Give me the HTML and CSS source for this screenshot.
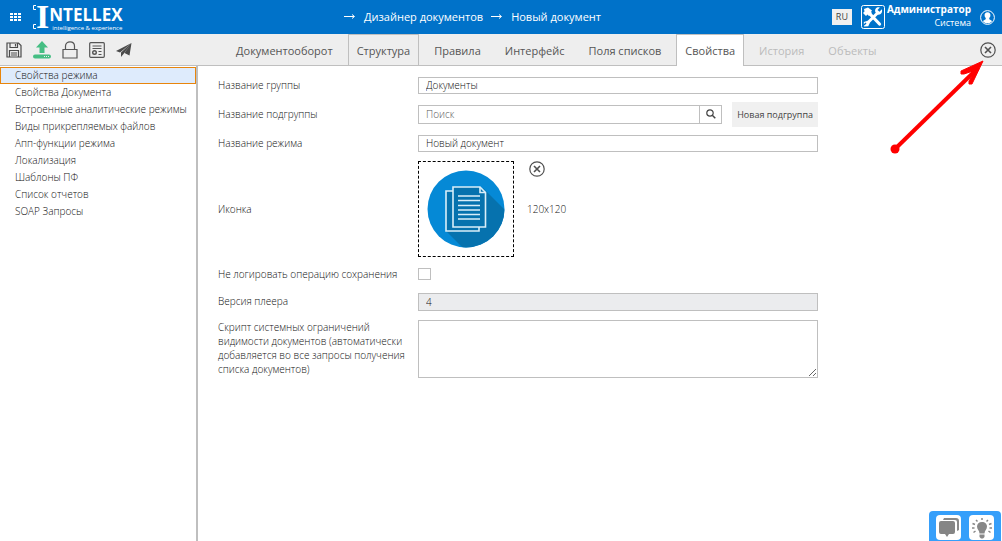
FILE: index.html
```html
<!DOCTYPE html>
<html lang="ru">
<head>
<meta charset="utf-8">
<title>Intellex</title>
<link rel="stylesheet" href="styles.css">
</head>
<body>
<svg class="defs" aria-hidden="true">
  <symbol id="close" viewBox="0 0 16 16">
    <circle cx="8" cy="8" r="7.2" fill="none" stroke="#505050" stroke-width="1.2"/>
    <path d="M5 5l6 6M11 5l-6 6" stroke="#505050" stroke-width="1.6"/>
  </symbol>
</svg>
<header class="header">
  <button class="icon-btn apps" aria-label="Меню">
    <svg width="11" height="9" viewBox="0 0 11 9" fill="#fff"><path d="M0 0h3v2H0zM4 0h3v2H4zM8 0h3v2H8zM0 3h3v2H0zM4 3h3v2H4zM8 3h3v2H8zM0 6h3v2H0zM4 6h3v2H4zM8 6h3v2H8z"/></svg>
  </button>
  <a class="logo" href="#">
    <svg class="logo-frame" width="3" height="24" viewBox="0 0 3 24"><path d="M3 .5H.5v4H3M3 23.500H.5v-4H3" fill="none" stroke="#fff"/></svg>
    <span class="logo-cap">I</span>
    <span class="logo-text"><span class="logo-name">NTELLEX</span><span class="logo-tag">intelligence &amp; experience</span></span>
  </a>
  <nav class="crumbs">
    <svg width="12" height="7" viewBox="0 0 12 7"><path d="M0 3.5h10M8 1.5l2.500 2-2.500 2" fill="none" stroke="#fff"/></svg>
    <a href="#">Дизайнер документов</a>
    <svg width="12" height="7" viewBox="0 0 12 7"><path d="M0 3.5h10M8 1.5l2.500 2-2.500 2" fill="none" stroke="#fff"/></svg>
    <a href="#">Новый документ</a>
  </nav>
  <div class="account">
    <button class="lang">RU</button>
    <button class="icon-btn tools" aria-label="Настройки">
      <svg width="24" height="24" viewBox="0 0 24 24"><rect x=".5" y=".5" width="23" height="23" rx="2" fill="none" stroke="#fff"/><path d="M9 9l9.500 10" stroke="#fff" stroke-width="3.200" stroke-linecap="round"/><path d="M3 4l4-1.500 4 3-1 1.500 1 1-3 3-1.500-1.500L5 11 2 8l1.500-1.500z" fill="#fff"/><path d="M5 19.500L16.500 8" stroke="#fff" stroke-width="3"/><path d="M20.800 4.200l-2.300 2.600-2-1.800 2.300-2.500c-3-.8-5.300 1.500-4.500 4.500l2.200 2.500c3 .8 5.500-2 4.300-5.300z" fill="#fff"/><path d="M3 21.500l-.2-4.500 4-1.200 2 2-1.500 3.500z" fill="#fff"/><path d="M3 20l2-2" stroke="#0072c9" stroke-width="1.500"/></svg>
    </button>
    <div class="user"><strong>Администратор</strong><span class="role">Система</span></div>
    <button class="icon-btn" aria-label="Профиль">
      <svg width="15" height="15" viewBox="0 0 15 15"><circle cx="7.500" cy="7.500" r="6.900" fill="none" stroke="#fff"/><path d="M7.500 2.200c2 0 3 1.300 2.900 3.100 0 1.300-.6 2.100-1.200 2.800 0 1.300.2 1.700 2 2.300l1 .5c-1.200 1.500-2.700 2.300-4.700 2.300s-3.500-.8-4.700-2.300l1-.5c1.800-.6 2-1 2-2.300-.6-.7-1.200-1.500-1.200-2.800-.1-1.800.9-3.100 2.900-3.100z" fill="#fff"/></svg>
    </button>
  </div>
</header>

<div class="toolbar">
  <div class="actions">
    <button class="icon-btn" aria-label="Сохранить"><svg width="16" height="16" viewBox="0 0 16 16" fill="none" stroke="#4a4a4a" stroke-width="1.200"><path d="M1 1h11.500L15 3.500V15H1zM4 1v4.500h7.500V1M9.500 2v2.500M3.500 15V8.500h9V15M5 11h6M5 13h6"/></svg></button>
    <button class="icon-btn" aria-label="Загрузить"><svg width="18" height="18" viewBox="0 0 18 18"><path d="M9 0l6 6.500h-3.500V12h-5V6.500H3z" fill="#45be83"/><rect x="0" y="13.500" width="18" height="4" rx="2" fill="#45be83"/><path d="M11 15.500h1M13 15.500h1M15 15.500h1" stroke="#eee"/></svg></button>
    <button class="icon-btn" aria-label="Заблокировать"><svg width="16" height="18" viewBox="0 0 16 18" fill="none" stroke="#555" stroke-width="1.200"><path d="M1 8.500h14v8.500H1zM3.500 8.500V5c0-5.500 9-5.500 9 0v3.500"/></svg></button>
    <button class="icon-btn" aria-label="Сертификат"><svg width="16" height="16" viewBox="0 0 16 16" fill="none" stroke="#555" stroke-width="1.200"><rect x=".7" y=".7" width="14.600" height="14.600" rx="1"/><path d="M3.500 4h9M3.500 6.500h9M9.500 9.500h3M9.500 12.500h3" stroke-width="1"/><circle cx="5.500" cy="10.500" r="1.800" stroke-width="1.400"/></svg></button>
    <button class="icon-btn" aria-label="Отправить"><svg width="16" height="14" viewBox="0 0 16 14" fill="#4a4a4a"><path d="M15.500 0L0 8l4 1.500zM15.500 0L5 9.500V14l2.500-3zM15.500 0l-7 10 5 2.500z"/></svg></button>
  </div>
  <nav class="tabs">
    <a class="tab" href="#">Документооборот</a>
    <a class="tab framed" href="#">Структура</a>
    <a class="tab" href="#">Правила</a>
    <a class="tab" href="#">Интерфейс</a>
    <a class="tab" href="#">Поля списков</a>
    <a class="tab framed active" href="#">Свойства</a>
    <a class="tab disabled" href="#">История</a>
    <a class="tab disabled" href="#">Объекты</a>
  </nav>
  <button class="icon-btn close" aria-label="Закрыть"><svg width="16" height="16"><use href="#close"/></svg></button>
</div>

<div class="body">
  <nav class="sidebar">
    <a class="selected" href="#">Свойства режима</a>
    <a href="#">Свойства Документа</a>
    <a href="#">Встроенные аналитические режимы</a>
    <a href="#">Виды прикрепляемых файлов</a>
    <a href="#">Апп-функции режима</a>
    <a href="#">Локализация</a>
    <a href="#">Шаблоны ПФ</a>
    <a href="#">Список отчетов</a>
    <a href="#">SOAP Запросы</a>
  </nav>
  <main class="content">
    <form class="form">
      <label for="group">Название группы</label>
      <input id="group" class="field" type="text" value="Документы">

      <label for="subgroup">Название подгруппы</label>
      <div class="subgroup">
        <div class="search">
          <input id="subgroup" class="field" type="text" placeholder="Поиск">
          <button type="button" class="search-btn" aria-label="Найти"><svg width="10" height="10" viewBox="0 0 10 10" fill="none" stroke="#444" stroke-width="1.200"><circle cx="4" cy="4" r="3.200"/><path d="M6.300 6.300l3 3" stroke-width="1.500"/></svg></button>
        </div>
        <button type="button" class="new-btn">Новая подгруппа</button>
      </div>

      <label for="mode">Название режима</label>
      <input id="mode" class="field" type="text" value="Новый документ">

      <span>Иконка</span>
      <div class="picture">
        <div class="preview">
          <svg width="78" height="78" viewBox="0 0 78 78">
            <clipPath id="disc"><circle cx="39" cy="39" r="38.500"/></clipPath>
            <g clip-path="url(#disc)">
              <rect width="78" height="78" fill="#0589d6"/>
              <path d="M56 18l30 30v40H46L19 61l34-2z" fill="#0672ae"/>
            </g>
            <g fill="#0672ae" stroke="#d9eef9" stroke-width="1.600">
              <path d="M19 21h33v40H19z"/>
              <path d="M26 17h27l5.500 5.500V57H26z"/>
              <path d="M53 17v5.500h5.500" fill="none"/>
              <path d="M31 26h22M31 30.500h22M31 35.500h22M31 40h22M31 44.500h22M31 49h22"/>
            </g>
          </svg>
        </div>
        <div class="picture-side">
          <button type="button" class="icon-btn" aria-label="Удалить"><svg width="16" height="16"><use href="#close"/></svg></button>
          <span>120x120</span>
        </div>
      </div>

      <label for="nolog">Не логировать операцию сохранения</label>
      <input id="nolog" class="check" type="checkbox">

      <label for="player">Версия плеера</label>
      <input id="player" class="field readonly" type="text" value="4" readonly>

      <label class="top" for="script">Скрипт системных ограничений видимости документов (автоматически добавляется во все запросы получения списка документов)</label>
      <textarea id="script" class="area"></textarea>
    </form>
  </main>
</div>

<svg class="pointer" width="100" height="96" viewBox="0 0 100 96" fill="none" stroke="#f00" aria-hidden="true">
  <circle cx="5" cy="89" r="4.500" fill="#f00" stroke="none"/>
  <path d="M5 89L88 8" stroke-width="4"/>
  <path d="M93 1L71 11v3h3l12-4-7 11v3h3z" fill="#f00" stroke="#f00" stroke-linejoin="round"/>
</svg>

<div class="dock">
  <button aria-label="Чат"><svg width="20" height="21" viewBox="0 0 20 21"><path d="M5 1h12q3 0 3 3v9l-2 1V5q0-2-2-2H4z" fill="#888"/><path d="M2 4h12q2 0 2 2v9q0 2-2 2h-4l-2 3-2-3H2q-2 0-2-2V6q0-2 2-2z" fill="#858585"/></svg></button>
  <button aria-label="Подсказка"><svg width="22" height="22" viewBox="0 0 22 22"><path d="M11 5c3 0 5 2 5 4.500 0 3-2.500 4-2.500 7H8.500c0-3-2.500-4-2.500-7C6 7 8 5 11 5zM8.500 17.500h5V20l-1.500 1.500h-2L8.500 20z" fill="#888"/><path d="M11 1v2M5 3l1.500 1.500M17 3l-1.500 1.500M1.500 6.500l2.500 1M20.500 6.500l-2.500 1M1 11h2.500M21 11h-2.500M2.500 15.500L4.500 14M19.500 15.500l-2-1.500" stroke="#888" stroke-width="1.500"/></svg></button>
</div>
</body>
</html>
```

FILE: styles.css
```css
* { box-sizing: border-box; }

body {
  margin: 0;
  min-height: 100vh;
  display: flex;
  flex-direction: column;
  background: #fff;
  color: #111;
  font: 300 10px/14px "Open Sans", "Noto Sans", sans-serif;
}

a { color: inherit; text-decoration: none; }
button, input, textarea { font: inherit; color: inherit; margin: 0; }
svg { display: block; }

.defs { position: absolute; width: 0; height: 0; }

.icon-btn { padding: 0; border: 0; background: none; }

.header {
  height: 34px;
  display: flex;
  align-items: center;
  padding: 0 7px 0 10px;
  background: #0072c9;
  color: #fff;
  font-weight: 400;
}

.logo { display: flex; align-items: center; width: 100px; margin-left: 12px; }
.logo-frame { flex: none; }
.logo-cap { font: bold 34px/34px "Liberation Serif", serif; }
.logo-text { display: flex; flex-direction: column; padding-top: 3px; }
.logo-name { font-size: 17px; line-height: 19px; font-weight: 700; }
.logo-tag { padding-left: 3px; font-size: 6px; line-height: 8px; white-space: nowrap; }

.crumbs {
  flex: 1;
  display: flex;
  align-items: center;
  gap: 8px;
  margin-left: 211px;
  padding-bottom: 1px;
  font-size: 11px;
}

.account { display: flex; align-items: center; }
.lang {
  width: 20px;
  height: 16px;
  margin-right: 9px;
  padding: 0;
  border: 0;
  background: #f0f0f0;
  color: #444;
  font-size: 9px;
  line-height: 14px;
}
.user {
  display: flex;
  flex-direction: column;
  align-items: flex-end;
  margin: 0 9px 2px 2px;
  line-height: 13px;
}
.user strong { font-weight: 700; }
.role { font-size: 9px; }

.toolbar {
  height: 32px;
  display: flex;
  background: #eee;
  border-bottom: 1px solid #bfbfbf;
}
.actions { display: flex; align-items: center; gap: 11px; width: 227px; padding-left: 6px; }
.tabs { flex: 1; display: flex; gap: 6px; font-size: 11px; font-weight: 400; color: #555; }
.tab { border: 1px solid transparent; border-bottom: 0; padding: 0 8px; line-height: 32px; }
.framed { border-color: #bfbfbf; }
.active { background: #fff; margin-bottom: -1px; }
.disabled { color: #bbb; }
.close { margin-right: 6px; }

.body { flex: 1; display: flex; }
.sidebar {
  width: 198px;
  border-right: 2px solid #bfbfbf;
  padding-top: 1px;
}
.sidebar a {
  display: block;
  height: 17px;
  padding-left: 14px;
  border: 1px solid transparent;
  line-height: 15px;
}
.sidebar .selected { background: #deebfc; border-color: #e8850c; }

.content { flex: 1; padding: 11px 20px 20px; }
.form {
  display: grid;
  grid-template-columns: 190px 400px;
  column-gap: 10px;
  row-gap: 8px;
  align-items: center;
}
.form > label { padding-bottom: 2px; }
.field {
  width: 100%;
  height: 17px;
  border: 1px solid #bfbfbf;
  border-radius: 0;
  padding: 0 7px 1px;
  background: #fff;
}
.field::placeholder { color: #555; opacity: 1; }
.readonly { height: 18px; background: #ebecee; }

.subgroup { display: flex; align-items: center; gap: 10px; }
.search { flex: 1; display: flex; }
.search .field { height: 19px; }
.search-btn {
  width: 24px;
  padding: 0 0 2px;
  display: flex;
  align-items: center;
  justify-content: center;
  background: #fff;
  border: 1px solid #bfbfbf;
  border-left: 0;
}
.new-btn { height: 25px; padding: 0 5px; border: 0; background: #f0f0f0; color: #444; font-size: 9px; font-weight: 400; }

.picture { display: flex; gap: 13px; padding-top: 1px; }
.preview {
  width: 96px;
  height: 96px;
  display: grid;
  place-items: center;
  border: 1px dashed #000;
}
.picture-side { display: flex; flex-direction: column; align-items: flex-start; gap: 25px; }
.picture-side .icon-btn { margin-left: 2px; }

.check {
  appearance: none;
  width: 13px;
  height: 12px;
  margin: 3px 0 5px;
  border: 1px solid #bfbfbf;
  background: #fff;
}
.top { align-self: start; padding-top: 1px; }
.area { display: block; width: 100%; height: 58px; border: 1px solid #bfbfbf; }

.pointer { position: absolute; top: 60px; right: 12px; }

.dock {
  position: fixed;
  right: 1px;
  bottom: 0;
  display: flex;
  gap: 8px;
  padding: 4px 7px 1px;
  border-radius: 4px 4px 0 0;
  background: #369ffa;
}
.dock button {
  width: 25px;
  height: 25px;
  padding: 0;
  display: grid;
  place-items: center;
  border: 0;
  border-radius: 4px;
  background: #fff;
}
```
